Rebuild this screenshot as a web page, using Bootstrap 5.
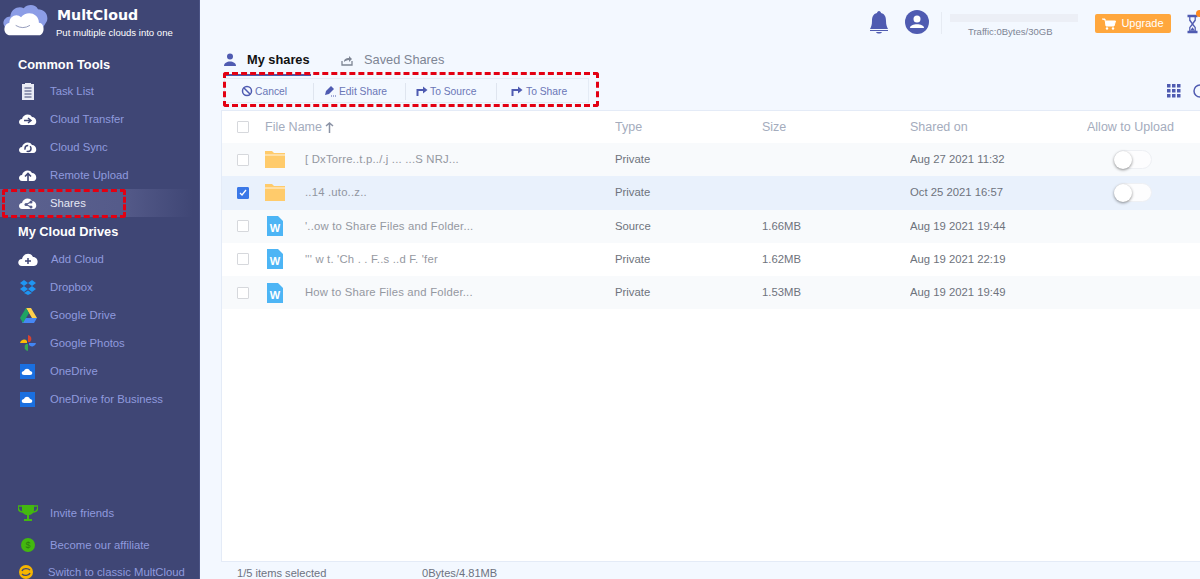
<!DOCTYPE html>
<html lang="en">
<head>
<meta charset="utf-8">
<title>MultCloud - My shares</title>
<link rel="stylesheet" href="https://cdn.jsdelivr.net/npm/bootstrap@5.3.0/dist/css/bootstrap.min.css">
<style>
html,body{height:100%;overflow:hidden}
body{font-family:"Liberation Sans",Arial,sans-serif;font-size:11.3px;background:#f3f8ff;color:#666}
.shell{height:579px;width:1200px}
.side{width:200px;flex:none;background:#3f4675;color:#8f9ade;border-right:1px solid #4c5485}
.brand{height:50px;padding:3px 0 0 2px}
.brand-name{font-family:"DejaVu Sans",sans-serif;font-weight:700;font-size:14.2px;line-height:15px;color:#fff;margin-top:5px}
.brand-tag{font-size:9.55px;line-height:12px;color:#fff;margin:4px 0 0 -1px;white-space:nowrap}
.brand-text{margin-left:8px}
.side-title{font-size:12.8px;font-weight:700;color:#fff;padding-left:18px;line-height:30px;height:27px}
.side-title.second{line-height:29px;height:28px}
.side-item{height:28px;display:flex;align-items:center;padding-left:18px;color:#8f9ade;white-space:nowrap;position:relative}
.side-item svg{flex:none;width:20px;height:18px;margin-right:12px}
.side-item.now{color:#e6e8f5;background:linear-gradient(90deg,#5c628f 0,#555b8a 60%,#3f4675 97%)}
.mark-red{position:absolute;border:3px dashed #e30012;border-radius:3px;pointer-events:none}
.mark-side{left:2px;top:0;width:124px;height:29px}
.mark-tool{left:-2px;top:-7px;width:376px;height:35px}
.foot-a{height:32px}
.foot-b{height:22px;padding-left:16px;margin-bottom:-4px}
.foot-b svg{margin-right:12px}
.main{min-width:0;position:relative}
.topbar{height:46px;margin-right:-4px}
.bell{width:20px;height:24px;margin:10px 16px 0 0}
.avatar{width:24px;height:24px;margin:10px 12px 0 0}
.vsep{width:1px;height:22px;background:#e6ebf3;margin:12px 8px 0 0}
.traffic{width:128px;margin:14px 17px 0 0}
.traffic-bar{height:8px;background:#eceff6}
.traffic-text{font-size:9.5px;color:#7d8494;line-height:12px;margin-top:4px;padding-left:18px}
.upgrade{width:76px;height:19px;background:#ffa73d;color:#fff;border-radius:2px;font-size:11px;line-height:19px;margin:14px 16px 0 0}
.upgrade svg{width:14px;height:12px;margin-right:5px}
.glass{width:17px;height:20px;position:relative;flex:none;margin-top:14px}
.glass svg{display:block;width:11px;height:20px}
.glass i{position:absolute;right:1px;top:-4px;width:7px;height:7px;border-radius:50%;background:#ff8a1e}
.tabs{height:30px;padding-left:24px;position:relative;white-space:nowrap}
.tab-a{width:87px;height:30px;border-bottom:2px solid #4e5aa8;color:#111;font-weight:700;font-size:12.8px}
.tab-a svg,.tab-b svg{width:12px;height:13px;flex:none}
.tab-a svg{margin:0 11px 0 0}
.tab-b{color:#7e8594;margin-left:30px;font-size:12.8px;padding-bottom:2px}
.tab-b svg{margin-right:11px}
.tools-line{height:25px;margin-top:2px;padding-left:24px}
.tools{position:relative;width:365px;height:25px;border:1px solid #e4ebf5;display:flex;align-items:center;color:#6a76b6;font-size:10.3px;padding-top:2px}
.tool{display:flex;align-items:center;height:17px;white-space:nowrap}
.tool svg{flex:none;width:12px;height:12px;margin-right:3px}
.tool+.tool{border-left:1px solid #dfe5ef}
.t1{width:88px;padding-left:16px}
.t1 svg{margin-right:2px}
.t2{width:92px;padding-left:10px}
.t3{width:91px;padding-left:10px}
.t3 svg{margin-right:2px}
.t4{padding-left:14px}
.views{gap:12px;margin-left:auto;overflow:hidden;width:33px;flex:none;padding-top:2px}
.views svg{width:14px;height:14px;flex:none}
.panel{margin:7px 0 0 21px;height:453px;background:#fff;border:1px solid #e4ebf7;border-right:0}
.files{table-layout:fixed;width:100%;margin:0;--bs-table-bg:transparent;font-size:11.3px;color:#666}
.files td,.files th{padding:0;border:0;vertical-align:middle;white-space:nowrap;overflow:hidden}
.files th{height:32px;font-weight:400;color:#a4acbd;font-size:12.5px}
.files td{height:33.3px;color:#6e737c}
.files tr.odd td{background:#f8fafc}
.files tr.sel td{background:#e9f1fc}
.files .c0{width:43px;padding-left:15px}
.tick{display:block;width:12px;height:12px;border:1px solid #d6d8dc;background:#fff;border-radius:1px}
.tick.on{background:#3b78e7;border-color:#3b78e7;position:relative}
.tick.on svg{position:absolute;left:1px;top:1px;width:8px;height:8px}
.ficon{width:20px;height:20px;flex:none;margin-right:20px}
.fname{color:#7b808a;letter-spacing:.2px;opacity:.8}
.sw{display:block;width:38px;height:19px;border:1px solid #eef0f4;border-radius:10px;background:#fdfdfe;position:relative;margin-left:27px}
.sw:before{content:"";position:absolute;left:-1px;top:0;width:18px;height:18px;border-radius:50%;background:#fff;box-shadow:0 1px 3px rgba(0,0,0,.45)}
.status{height:17px;padding-left:37px;color:#6d7280;font-size:11.1px;line-height:22px}
.status span:first-child{width:185px}
</style>
</head>
<body>
<div class="shell d-flex">
  <aside class="side d-flex flex-column">
    <div class="brand d-flex">
      <svg width="47" height="34" viewBox="0 0 52 38" aria-hidden="true"><path d="M4 28C-2 22 3 15 9 15 10 6 19 3 24 6 28 1 37 1 40 7 47 7 52 13 50 20L44 30Z" fill="#8c9de6"/><path d="M9 36C1 36 0 24 8 22 8 14 17 11 21 16 27 8 41 11 41 22 48 22 48 36 41 36Z" fill="#fff"/><path d="M15 25Q23 30 31 25" fill="none" stroke="#8b93b5" stroke-width="1"/></svg>
      <div class="brand-text">
        <div class="brand-name">MultCloud</div>
        <div class="brand-tag">Put multiple clouds into one</div>
      </div>
    </div>
    <div class="side-title">Common Tools</div>
    <div class="side-item"><svg viewBox="0 0 20 18"><path d="M4 2h3V1h6v1h3v16H4Z" fill="#e9ebf5"/><path d="M6.500 6h7M6.500 9h7M6.500 12h7M6.500 15h7" stroke="#3f4675" stroke-width="1"/></svg>Task List</div>
    <div class="side-item"><svg viewBox="0 0 20 18"><path d="M4 15C0 15 0 9 4 9 5 4 12 3 14 7 19 7 20 15 15 15Z" fill="#fff"/><path d="M6 10.500h6M10 8l3 2.500-3 2.500" fill="none" stroke="#3f4675" stroke-width="1.500"/></svg>Cloud Transfer</div>
    <div class="side-item"><svg viewBox="0 0 20 18"><path d="M4 15C0 15 0 9 4 9 5 4 12 3 14 7 19 7 20 15 15 15Z" fill="#fff"/><circle cx="10" cy="10.500" r="3" fill="none" stroke="#3f4675" stroke-width="1.500" stroke-dasharray="6 2"/></svg>Cloud Sync</div>
    <div class="side-item"><svg viewBox="0 0 20 18"><path d="M4 15C0 15 0 9 4 9 5 4 12 3 14 7 19 7 20 15 15 15Z" fill="#fff"/><path d="M10 15V8M7 10.500l3-3 3 3" fill="none" stroke="#3f4675" stroke-width="1.600"/></svg>Remote Upload</div>
    <div class="side-item now"><svg viewBox="0 0 20 18"><path d="M4 15C0 15 0 9 4 9 5 4 12 3 14 7 19 7 20 15 15 15Z" fill="#fff"/><path d="M13 8l-5 2.500 5 2.500" fill="none" stroke="#555b8a" stroke-width="1.200"/><circle cx="13" cy="8" r="1.500" fill="#555b8a"/><circle cx="8" cy="10.500" r="1.500" fill="#555b8a"/><circle cx="13" cy="13" r="1.500" fill="#555b8a"/></svg>Shares<span class="mark-red mark-side"></span></div>
    <div class="side-title second">My Cloud Drives</div>
    <div class="side-item"><svg viewBox="0 0 20 18" style="margin-right:13px"><path d="M4 16C-1 16-1 9 4 9 5 3 13 2 15 7 21 7 21 16 16 16Z" fill="#fff"/><path d="M10 8v6M7 11h6" stroke="#3f4675" stroke-width="1.500"/></svg>Add Cloud</div>
    <div class="side-item"><svg viewBox="0 0 20 18"><path d="M6 2 2 5l4 3-4 3 4 3 4-3 4 3 4-3-4-3 4-3-4-3-4 3Z" fill="#1f96f3"/><path d="M6 15l4 2 4-2-4-2.600Z" fill="#1f96f3"/><path d="M6 8l4-3 4 3-4 3Z" fill="#3f4675"/></svg>Dropbox</div>
    <div class="side-item"><svg viewBox="0 0 20 18"><path d="M13 2l6 10h-5L8 2Z" fill="#ffd04b"/><path d="M7 12h12l-3 5H4Z" fill="#4687f4"/><path d="M2 12 8 2l3 5-6 10Z" fill="#1fa463"/></svg>Google Drive</div>
    <div class="side-item"><svg viewBox="0 0 20 18"><path d="M10 8V1a4 4 0 0 1 2 7Z" fill="#d9432f"/><path d="M11 9h7a4 4 0 0 1-7 2Z" fill="#4285f4"/><path d="M10 10v7a4 4 0 0 1-2-7Z" fill="#34a853"/><path d="M9 9H2a4 4 0 0 1 7-2Z" fill="#fbbc05"/></svg>Google Photos</div>
    <div class="side-item"><svg viewBox="0 0 20 18"><rect x="2" y="2" width="15" height="15" fill="#1a6fe0"/><path d="M6 13c-3 0-3-4 0-4 1-3 5-3 6 0 3 0 3 4 0 4Z" fill="#fff"/></svg>OneDrive</div>
    <div class="side-item"><svg viewBox="0 0 20 18"><rect x="2" y="2" width="15" height="15" fill="#1a6fe0"/><path d="M6 13c-3 0-3-4 0-4 1-3 5-3 6 0 3 0 3 4 0 4Z" fill="#fff"/></svg>OneDrive for Business</div>
    <div class="mt-auto">
      <div class="side-item foot-a"><svg viewBox="0 0 20 18"><path d="M4 1h12v5c0 3-3 5-5 5v4h3v2H6v-2h3v-4C7 11 4 9 4 6Z" fill="#43b80f"/><path d="M4 2H0c0 4 2 6 5 6M16 2h4c0 4-2 6-5 6" fill="none" stroke="#43b80f" stroke-width="1.500"/></svg>Invite friends</div>
      <div class="side-item foot-a"><svg viewBox="0 0 20 18"><circle cx="10" cy="9" r="7" fill="#43b80f"/><text x="10" y="12" font-size="9" text-anchor="middle" fill="#2c7d10">$</text></svg>Become our affiliate</div>
      <div class="side-item foot-b"><svg viewBox="0 0 20 18"><circle cx="10" cy="9" r="7" fill="#f7b500"/><path d="M6 8c1-3 6-3 8-1M14 10c-1 3-6 3-8 1" fill="none" stroke="#3f4675" stroke-width="1.400"/></svg>Switch to classic MultCloud</div>
    </div>
  </aside>
  <main class="main flex-grow-1 d-flex flex-column">
    <div class="topbar d-flex align-items-start justify-content-end">
      <svg class="bell" viewBox="0 0 20 24"><path d="M10 1c1 0 2 1 2 2 4 1 5 4 5 8 0 4 1 6 2 8H1c1-2 2-4 2-8 0-4 1-7 5-8 0-1 1-2 2-2Z" fill="#4f5bb1"/><path d="M1 20h18v1H1ZM7 22h6c-1 2-5 2-6 0Z" fill="#4f5bb1"/></svg>
      <svg class="avatar" viewBox="0 0 24 24"><circle cx="12" cy="12" r="12" fill="#4f5bb1"/><circle cx="12" cy="9" r="3.500" fill="#fff"/><path d="M5 18c0-5 14-5 14 0Z" fill="#fff"/></svg>
      <span class="vsep"></span>
      <div class="traffic"><div class="traffic-bar"></div><div class="traffic-text">Traffic:0Bytes/30GB</div></div>
      <div class="upgrade d-flex align-items-center justify-content-center"><svg viewBox="0 0 14 12"><path d="M0 1h3l1 7h8l1.500-5H4" fill="#fff" stroke="#fff"/><circle cx="5" cy="10.500" r="1.200" fill="#fff"/><circle cx="11" cy="10.500" r="1.200" fill="#fff"/></svg>Upgrade</div>
      <div class="glass"><svg viewBox="0 0 12 24"><path d="M0 1h12v3H0ZM0 20h12v3H0ZM2 4h1.500v3L6 10.500 8.500 7V4H10v4l-3 4 3 4v4H8.500v-3.500L6 13.500 3.500 16.500V20H2v-4l3-4-3-4Z" fill="#4f5bb1"/><path d="M3 20l3-4 3 4Z" fill="#4f5bb1"/></svg><i></i></div>
    </div>
    <div class="tabs d-flex">
      <div class="tab-a d-flex align-items-center"><svg viewBox="0 0 12 13"><circle cx="6" cy="3.500" r="3" fill="#4f5bb1"/><path d="M0 13c0-6 12-6 12 0Z" fill="#4f5bb1"/></svg>My shares</div>
      <div class="tab-b d-flex align-items-center"><svg viewBox="0 0 12 13"><path d="M1 8v4h10V8" fill="none" stroke="#7e8594" stroke-width="1.300"/><path d="M3 9c0-3 2-4 5-4V3l3 3-3 3V7C6 7 4 8 3 9Z" fill="#7e8594"/></svg>Saved Shares</div>
    </div>
    <div class="tools-line d-flex">
      <div class="tools">
        <span class="mark-red mark-tool"></span>
        <div class="tool t1"><svg viewBox="0 0 12 12"><circle cx="6" cy="6" r="4.500" fill="none" stroke="#4f5bb1" stroke-width="1.500"/><path d="M3 3l6 6" stroke="#4f5bb1" stroke-width="1.500"/></svg>Cancel</div>
        <div class="tool t2"><svg viewBox="0 0 12 12"><path d="M1 10l1-4 5-5 3 3-5 5Z" fill="#4f5bb1"/><path d="M7 11h1M9 11h1M11 11h1" stroke="#4f5bb1"/></svg>Edit Share</div>
        <div class="tool t3"><svg viewBox="0 0 12 12"><path d="M1.500 11V5h6" fill="none" stroke="#4f5bb1" stroke-width="2"/><path d="M7 1.500 11.500 5 7 8.500Z" fill="#4f5bb1"/></svg>To Source</div>
        <div class="tool t4"><svg viewBox="0 0 12 12"><path d="M1.500 11V5h6" fill="none" stroke="#4f5bb1" stroke-width="2"/><path d="M7 1.500 11.500 5 7 8.500Z" fill="#4f5bb1"/></svg>To Share</div>
      </div>
      <div class="views d-flex align-items-center">
        <svg viewBox="0 0 14 14" fill="#4f5bb1"><rect x="0" y="0" width="3.500" height="3.500"/><rect x="5" y="0" width="3.500" height="3.500"/><rect x="10" y="0" width="3.500" height="3.500"/><rect x="0" y="5" width="3.500" height="3.500"/><rect x="5" y="5" width="3.500" height="3.500"/><rect x="10" y="5" width="3.500" height="3.500"/><rect x="0" y="10" width="3.500" height="3.500"/><rect x="5" y="10" width="3.500" height="3.500"/><rect x="10" y="10" width="3.500" height="3.500"/></svg>
        <svg viewBox="0 0 14 14"><circle cx="7" cy="7" r="6" fill="none" stroke="#4f5bb1" stroke-width="1.500"/></svg>
      </div>
    </div>
    <div class="panel">
      <table class="table files">
        <thead>
          <tr>
            <th class="c0"><span class="tick"></span></th>
            <th style="width:350px">File Name <svg width="9" height="11" viewBox="0 0 9 11"><path d="M4.500 1v10M1 4l3.500-3L8 4" fill="none" stroke="#8a92a5" stroke-width="1.500"/></svg></th>
            <th style="width:147px">Type</th>
            <th style="width:148px">Size</th>
            <th style="width:177px">Shared on</th>
            <th>Allow to Upload</th>
          </tr>
        </thead>
        <tbody>
          <tr class="odd">
            <td class="c0"><span class="tick"></span></td>
            <td><div class="d-flex align-items-center"><svg class="ficon" viewBox="0 0 20 20"><path d="M0 1h7l2 2h11v15H0Z" fill="#ffcb6b"/><path d="M0 5h20" stroke="#fff" stroke-width=".8"/></svg><span class="fname">[ DxTorre..t.p../.j ... ...S NRJ...</span></div></td>
            <td>Private</td><td></td><td>Aug 27 2021 11:32</td><td><span class="sw"></span></td>
          </tr>
          <tr class="sel">
            <td class="c0"><span class="tick on"><svg viewBox="0 0 8 8"><path d="M1 4l2 2 4-5" fill="none" stroke="#fff" stroke-width="1.300"/></svg></span></td>
            <td><div class="d-flex align-items-center"><svg class="ficon" viewBox="0 0 20 20"><path d="M0 1h7l2 2h11v15H0Z" fill="#ffcb6b"/><path d="M0 5h20" stroke="#fff" stroke-width=".8"/></svg><span class="fname">..14 .uto..z..</span></div></td>
            <td>Private</td><td></td><td>Oct 25 2021 16:57</td><td><span class="sw"></span></td>
          </tr>
          <tr class="odd">
            <td class="c0"><span class="tick"></span></td>
            <td><div class="d-flex align-items-center"><svg class="ficon" viewBox="0 0 20 20"><path d="M2 0h11l5 5v15H2Z" fill="#4db5f5"/><text x="10" y="16" font-size="11" font-weight="700" text-anchor="middle" fill="#fff" font-family="Liberation Sans">W</text></svg><span class="fname">'..ow to Share Files and Folder...</span></div></td>
            <td>Source</td><td>1.66MB</td><td>Aug 19 2021 19:44</td><td></td>
          </tr>
          <tr>
            <td class="c0"><span class="tick"></span></td>
            <td><div class="d-flex align-items-center"><svg class="ficon" viewBox="0 0 20 20"><path d="M2 0h11l5 5v15H2Z" fill="#4db5f5"/><text x="10" y="16" font-size="11" font-weight="700" text-anchor="middle" fill="#fff" font-family="Liberation Sans">W</text></svg><span class="fname">''' w t. 'Ch . . F..s ..d F. 'fer</span></div></td>
            <td>Private</td><td>1.62MB</td><td>Aug 19 2021 22:19</td><td></td>
          </tr>
          <tr class="odd">
            <td class="c0"><span class="tick"></span></td>
            <td><div class="d-flex align-items-center"><svg class="ficon" viewBox="0 0 20 20"><path d="M2 0h11l5 5v15H2Z" fill="#4db5f5"/><text x="10" y="16" font-size="11" font-weight="700" text-anchor="middle" fill="#fff" font-family="Liberation Sans">W</text></svg><span class="fname">How to Share Files and Folder...</span></div></td>
            <td>Private</td><td>1.53MB</td><td>Aug 19 2021 19:49</td><td></td>
          </tr>
        </tbody>
      </table>
    </div>
    <div class="status d-flex"><span>1/5 items selected</span><span>0Bytes/4.81MB</span></div>
  </main>
</div>
<script src="https://cdn.jsdelivr.net/npm/bootstrap@5.3.0/dist/js/bootstrap.bundle.min.js"></script>
</body>
</html>
